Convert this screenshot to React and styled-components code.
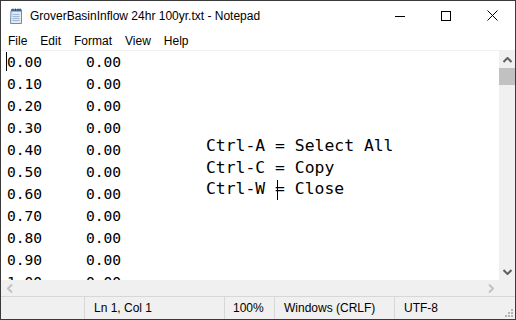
import React from "react";
import styled, { createGlobalStyle } from "styled-components";

const Global = createGlobalStyle`
  html, body {
    margin: 0;
    padding: 0;
    background: #ffffff;
  }
  * {
    box-sizing: border-box;
  }
`;

const rows = ["0.00", "0.10", "0.20", "0.30", "0.40", "0.50", "0.60", "0.70", "0.80", "0.90", "1.00"];
const menus = ["File", "Edit", "Format", "View", "Help"];
const hints = ["Ctrl-A = Select All", "Ctrl-C = Copy", "Ctrl-W = Close"];

const NoteIcon = () => (
  <svg width="16" height="16" viewBox="0 0 16 16">
    <path d="M3 2.5 L13.5 2.5 L13.5 15.5 L2.5 15.5 Z" fill="#dfeaf5" stroke="#6b8db3" />
    <rect x="3" y="1" width="10.5" height="2.5" fill="#4f7fb0" />
    <path d="M5 0.5v2.5M7.5 0.5v2.5M10 0.5v2.5M12 0.5v2.5" stroke="#2d4f74" strokeWidth="1" />
    <path d="M4.5 6.5h7M4.5 8.5h7M4.5 10.5h7M4.5 12.5h7" stroke="#9fb6cf" strokeWidth="1" />
  </svg>
);

const App = () => {
  return (
    <>
      <Global />
      <Window>
        <TitleBar>
          <IconBox>
            <NoteIcon />
          </IconBox>
          <Title>GroverBasinInflow 24hr 100yr.txt - Notepad</Title>
          <Controls>
            <CtrlButton>
              <svg width="10" height="10" viewBox="0 0 10 10">
                <path d="M0 5.5h10" stroke="#000" strokeWidth="1" />
              </svg>
            </CtrlButton>
            <CtrlButton>
              <svg width="10" height="10" viewBox="0 0 10 10">
                <rect x="0.5" y="0.5" width="9" height="9" fill="none" stroke="#000" strokeWidth="1" />
              </svg>
            </CtrlButton>
            <CtrlButton>
              <svg width="11" height="11" viewBox="0 0 11 11">
                <path d="M0.5 0.5L10.5 10.5M10.5 0.5L0.5 10.5" stroke="#000" strokeWidth="1" />
              </svg>
            </CtrlButton>
          </Controls>
        </TitleBar>

        <MenuBar>
          {menus.map((m) => (
            <MenuItem key={m}>{m}</MenuItem>
          ))}
        </MenuBar>

        <Editor>
          <TextArea>
            <Caret />
            {rows.map((r) => (
              <Line key={r}>
                <Cell>{r}</Cell>
                <Cell>0.00</Cell>
              </Line>
            ))}
            <Hints>
              {hints.map((h) => (
                <HintLine key={h}>{h}</HintLine>
              ))}
            </Hints>
            <IBeam />
          </TextArea>
          <VScroll>
            <ArrowBox $h={17}>
              <svg width="9" height="6" viewBox="0 0 9 6">
                <path d="M0.5 5L4.5 1L8.5 5" fill="none" stroke="#606060" strokeWidth="2" />
              </svg>
            </ArrowBox>
            <Thumb />
            <Track />
            <ArrowBox $h={17}>
              <svg width="9" height="6" viewBox="0 0 9 6">
                <path d="M0.5 1L4.5 5L8.5 1" fill="none" stroke="#606060" strokeWidth="2" />
              </svg>
            </ArrowBox>
          </VScroll>
        </Editor>

        <HScrollRow>
          <HScroll>
            <ArrowBox $w={17}>
              <svg width="6" height="9" viewBox="0 0 6 9">
                <path d="M5 0.5L1 4.5L5 8.5" fill="none" stroke="#c2c2c2" strokeWidth="2" />
              </svg>
            </ArrowBox>
            <Track />
            <ArrowBox $w={17}>
              <svg width="6" height="9" viewBox="0 0 6 9">
                <path d="M1 0.5L5 4.5L1 8.5" fill="none" stroke="#c2c2c2" strokeWidth="2" />
              </svg>
            </ArrowBox>
          </HScroll>
          <Corner />
        </HScrollRow>

        <StatusBar>
          <Segment $w={84} />
          <Segment $w={140}>Ln 1, Col 1</Segment>
          <Segment $w={50} $pad={8}>100%</Segment>
          <Segment $w={120}>Windows (CRLF)</Segment>
          <Segment $grow>UTF-8</Segment>
          <Grip>
            <svg width="10" height="10" viewBox="0 0 10 10">
              <g fill="#b4b4b4">
                <rect x="7" y="1" width="2" height="2" />
                <rect x="4" y="4" width="2" height="2" />
                <rect x="7" y="4" width="2" height="2" />
                <rect x="1" y="7" width="2" height="2" />
                <rect x="4" y="7" width="2" height="2" />
                <rect x="7" y="7" width="2" height="2" />
              </g>
            </svg>
          </Grip>
        </StatusBar>
      </Window>
    </>
  );
};

export default App;

const Window = styled.div`
  width: 516px;
  height: 320px;
  border: 1px solid #3a3a3a;
  background: #ffffff;
  display: flex;
  flex-direction: column;
  font-family: "Liberation Sans", Arial, sans-serif;
  font-size: 12px;
  color: #000;
  overflow: hidden;
`;

const TitleBar = styled.div`
  height: 30px;
  display: flex;
  align-items: center;
  flex-shrink: 0;
`;

const IconBox = styled.div`
  width: 16px;
  height: 16px;
  margin: 0 6px 0 7px;
  display: flex;
`;

const Title = styled.div`
  flex: 1;
  font-size: 12px;
  padding-bottom: 1px;
`;

const Controls = styled.div`
  display: flex;
  height: 100%;
`;

const CtrlButton = styled.div`
  width: 46px;
  height: 100%;
  display: flex;
  align-items: center;
  justify-content: center;
  padding-bottom: 1px;
`;

const MenuBar = styled.div`
  height: 19px;
  display: flex;
  align-items: center;
  flex-shrink: 0;
  padding-left: 0.5px;
`;

const MenuItem = styled.div`
  padding: 1px 6.5px 0;
  font-size: 12px;
`;

const Editor = styled.div`
  flex: 1;
  display: flex;
  border-top: 1px solid #f0f0f0;
  min-height: 0;
`;

const TextArea = styled.div`
  position: relative;
  flex: 1;
  overflow: hidden;
  padding-left: 6px;
  font-family: "DejaVu Sans Mono", "Liberation Mono", monospace;
  font-size: 14.6px;
  line-height: 22px;
`;

const Caret = styled.div`
  position: absolute;
  left: 5px;
  top: 1px;
  width: 1px;
  height: 19px;
  background: #000;
`;

const Line = styled.div`
  display: grid;
  grid-template-columns: 79px auto;
  white-space: pre;
`;

const Cell = styled.span``;

const Hints = styled.div`
  position: absolute;
  left: 205px;
  top: 84px;
  font-size: 16.4px;
  line-height: 21.5px;
`;

const HintLine = styled.div`
  white-space: pre;
`;

const IBeam = styled.div`
  position: absolute;
  left: 276px;
  top: 129px;
  width: 1px;
  height: 20px;
  background: #000;
`;

const VScroll = styled.div`
  width: 16px;
  background: #f0f0f0;
  display: flex;
  flex-direction: column;
`;

const ArrowBox = styled.div`
  width: ${(p) => (p.$w ? `${p.$w}px` : "100%")};
  height: ${(p) => (p.$h ? `${p.$h}px` : "100%")};
  display: flex;
  align-items: center;
  justify-content: center;
  flex-shrink: 0;
`;

const Thumb = styled.div`
  height: 17px;
  background: #c1c1c1;
  flex-shrink: 0;
`;

const Track = styled.div`
  flex: 1;
`;

const HScrollRow = styled.div`
  height: 16px;
  display: flex;
  flex-shrink: 0;
`;

const HScroll = styled.div`
  flex: 1;
  display: flex;
  background: #f0f0f0;
`;

const Corner = styled.div`
  width: 16px;
  background: #f0f0f0;
`;

const StatusBar = styled.div`
  height: 23px;
  flex-shrink: 0;
  display: flex;
  background: #f0f0f0;
  border-top: 1px solid #d7d7d7;
  position: relative;
`;

const Segment = styled.div`
  width: ${(p) => (p.$w ? `${p.$w}px` : "auto")};
  flex: ${(p) => (p.$grow ? 1 : "none")};
  border-right: ${(p) => (p.$grow ? "none" : "1px solid #d7d7d7")};
  padding-left: ${(p) => (p.$pad ? p.$pad : 9)}px;
  display: flex;
  align-items: center;
  font-size: 12px;
  white-space: nowrap;
`;

const Grip = styled.div`
  position: absolute;
  right: 1px;
  bottom: 1px;
  width: 10px;
  height: 10px;
  display: flex;
`;
